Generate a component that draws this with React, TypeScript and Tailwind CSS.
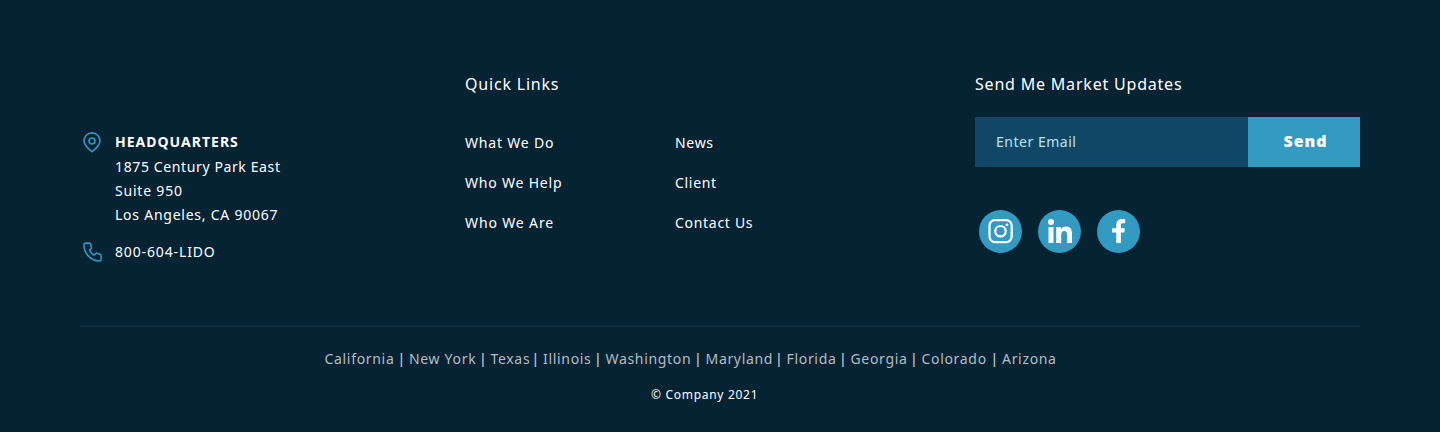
import React from "react";

const states = ["California", "New York", "Texas", "Illinois", "Washington", "Maryland", "Florida", "Georgia", "Colorado", "Arizona"];

function Pin() {
  return (
    <svg className="h-[21px] w-[18px]" viewBox="0 0 18 21" fill="none" stroke="#3097c3" strokeWidth="1.700" strokeLinejoin="round">
      <path d="M9 19.7C6.2 17.3 1 13.2 1 8.9a8 8 0 0 1 16 0c0 4.3-5.2 8.4-8 10.8Z" />
      <circle cx="9" cy="9" r="3" />
    </svg>
  );
}

function Phone() {
  return (
    <svg className="h-5 w-[19px]" viewBox="0 0 20 20" preserveAspectRatio="none" fill="none" stroke="#3097c3" strokeWidth="1.700" strokeLinejoin="round" strokeLinecap="round">
      <path d="M1 3C1 1.900 1.700 1.200 2.700 1.200h4c.6 0 1 .3 1.200.8l1 3.300c.2.500.1 1-.3 1.400L7 8.300c1.100 2.300 2.500 3.700 4.800 4.800l1.600-1.600c.4-.4.9-.5 1.400-.3l3.300 1c.5.200.9.600.9 1.200v4c0 1-.8 1.600-1.800 1.600C8.500 19 1 11.500 1 3Z" />
    </svg>
  );
}

function Instagram() {
  return (
    <svg className="size-[43px]" viewBox="0 0 43 43" fill="none" stroke="#fff" strokeWidth="2.200">
      <rect x="10.500" y="10.100" width="22.200" height="22" rx="5.500" />
      <circle cx="21.500" cy="21.200" r="5.200" />
      <circle cx="28" cy="14.800" r="1.400" fill="#fff" stroke="none" />
    </svg>
  );
}

function LinkedIn() {
  return (
    <svg className="size-[43px]" viewBox="0 0 43 43" fill="#fff">
      <circle cx="13" cy="12" r="3" />
      <path d="M10.500 17h5v16h-5ZM18.200 17H23v2.200c1-1.700 2.800-2.600 5-2.600 4.800 0 6 3.100 6 7.300V33h-5v-8c0-2.100-.3-4-2.700-4-2.500 0-3.100 1.900-3.100 4v8h-5Z" />
    </svg>
  );
}

function Facebook() {
  return (
    <svg className="size-[43px]" viewBox="0 0 43 43" fill="#fff">
      <path d="M19.300 33V22.500h-4.200V18.300h4.200v-3.200c0-4.100 2.300-6.100 5.900-6.100 1.200 0 2.300.1 3 .2v4h-2.300c-1.600 0-2 .9-2 2.100v3h4l-.6 4.200h-3.400V33Z" />
    </svg>
  );
}

export default function App() {
  return (
    <footer className="h-[432px] overflow-hidden bg-[#062333] px-20 font-['Noto_Sans',sans-serif] text-sm tracking-[0.8px] whitespace-nowrap text-white">
      <div className="flex h-[325px] pt-[72px]">
        <section className="w-[385px] pt-[58px]">
          <div className="flex">
            <div className="w-[35px] pt-0.5 pl-[3px]"><Pin /></div>
            <address className="leading-6 not-italic">
              <p className="font-bold tracking-[1.010px]">HEADQUARTERS</p>
              <p className="mt-px tracking-[0.620px]">1875 Century Park East</p>
              <p>Suite 950</p>
              <p className="tracking-[0.760px]">Los Angeles, CA 90067</p>
            </address>
          </div>
          <div className="mt-[13px] flex items-center">
            <div className="w-[35px] pl-[3px]"><Phone /></div>
            <a className="leading-6 tracking-[0.860px]">800-604-LIDO</a>
          </div>
        </section>
        <section className="w-[510px]">
          <h2 className="text-base leading-6">Quick Links</h2>
          <div className="flex pt-[27px] leading-10">
            <ul className="w-[210px]">
              <li>What We Do</li>
              <li>Who We Help</li>
              <li className="tracking-[0.860px]">Who We Are</li>
            </ul>
            <ul className="tracking-[0.700px]">
              <li>News</li>
              <li>Client</li>
              <li>Contact Us</li>
            </ul>
          </div>
        </section>
        <section className="w-[385px]">
          <h2 className="text-base leading-6">Send Me Market Updates</h2>
          <form className="mt-[21px] flex h-[50px]">
            <div className="flex w-[273px] items-center bg-[#114764] pl-[21px] tracking-[0.520px] text-[#b5e5f7]">Enter Email</div>
            <button type="button" className="w-28 bg-[#339ac2] pb-0.5 pl-[3px] text-base font-black tracking-[1px]">Send</button>
          </form>
          <div className="mt-[43px] flex gap-4 pl-1">
            <a className="rounded-full bg-[#339ac2]"><Instagram /></a>
            <a className="rounded-full bg-[#339ac2]"><LinkedIn /></a>
            <a className="rounded-full bg-[#339ac2]"><Facebook /></a>
          </div>
        </section>
      </div>
      <div className="border-t-2 border-[#0d2b40] pt-5">
        <ul className="ml-[244.500px] grid grid-cols-[84.500px_81.500px_52.500px_62.500px_100px_81px_64px_71px_80.500px_60px] leading-6 tracking-[0.680px] text-[#b4bdc2]">
          {states.map((state, i) => (
            <li key={state} className="flex justify-between">
              <span>{state}</span>
              {i < states.length - 1 && <span className="pr-[3px] font-semibold">|</span>}
            </li>
          ))}
        </ul>
        <p className="mt-3 pl-[571px] text-xs leading-6 tracking-[0.700px]">© Company 2021</p>
      </div>
    </footer>
  );
}
